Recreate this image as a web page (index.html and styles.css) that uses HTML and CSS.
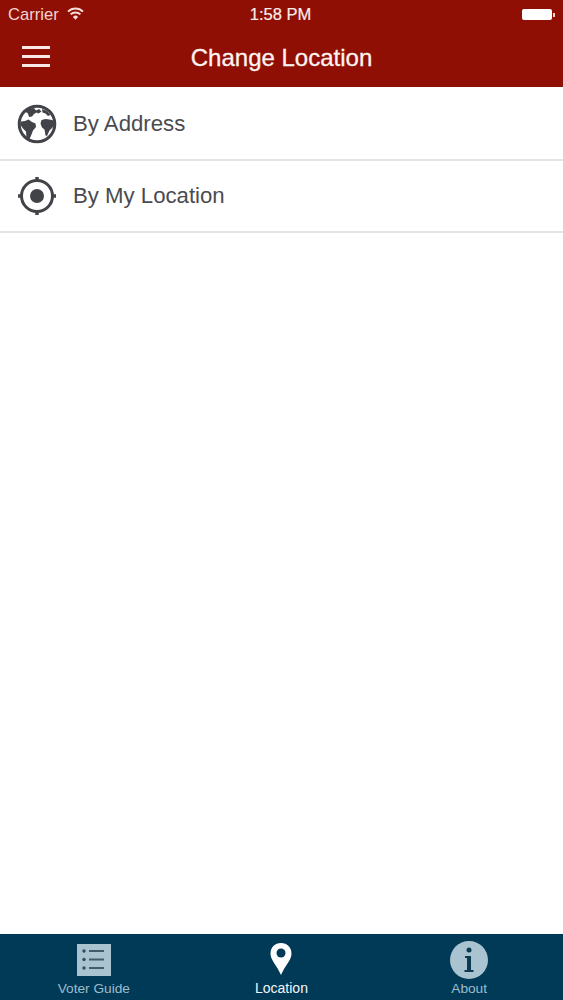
FILE: index.html
```html
<!DOCTYPE html>
<html lang="en">
<head>
  <meta charset="UTF-8" />
  <meta name="viewport" content="width=device-width, initial-scale=1" />
  <title>Change Location</title>
  <link rel="stylesheet" href="styles.css">
</head>
<body>
  <div class="app">
    <header class="top">
      <div class="status">
        <div class="status-left">
          <span class="carrier">Carrier</span>
          <svg class="wifi" width="17" height="13" viewBox="0 0 17 13">
            <path d="M1 4.6a10.6 10.6 0 0 1 15 0" fill="none" stroke="#f6dcd8" stroke-width="2"/>
            <path d="M3.6 7.4a7 7 0 0 1 9.800 0" fill="none" stroke="#f6dcd8" stroke-width="2"/>
            <path d="M8.500 12.800L5.900 9.900a3.700 3.700 0 0 1 5.200 0z" fill="#f6dcd8"/>
          </svg>
        </div>
        <span class="time">1:58 PM</span>
        <div class="battery">
          <span class="battery-body"></span>
          <span class="battery-tip"></span>
        </div>
      </div>
      <div class="navbar">
        <button class="menu-btn" aria-label="Menu">
          <span></span><span></span><span></span>
        </button>
        <h1>Change Location</h1>
      </div>
    </header>

    <main class="options">
      <a class="option" href="#">
        <svg class="option-icon" width="40" height="40" viewBox="0 0 40 40">
          <circle cx="20" cy="20" r="17.800" fill="none" stroke="#414349" stroke-width="3"/>
          <path d="M4 17.500l4-.5 3.500-1.500 3.500 2.500 3.500 1.500.5 3.500-3 3.500-1.500 4-2 4.500-2 .5-1-2-.5-6-3-3-3-4z" fill="#414349"/>
          <path d="M24.500 16l4-1 4 .5 4.500 1 .5 4-2 3-3 3-2.500 5.500-1.500-.5-1-6-2.500-2-1.500-4z" fill="#414349"/>
          <path d="M8 7.500l4-3 5-.5 2 2.500 3-1.500 2.500 2.500-3 2-2-1-2.500 1.500-2 2.500-3 .5-1-3.500z" fill="#414349"/>
          <path d="M25 5l5 2 3.500 4-2.500 1-2.500-2.500-3-1z" fill="#414349"/>
        </svg>
        <span>By Address</span>
      </a>
      <a class="option" href="#">
        <svg class="option-icon" width="40" height="40" viewBox="0 0 40 40">
          <circle cx="20" cy="20" r="15.500" fill="none" stroke="#414349" stroke-width="3"/>
          <circle cx="20" cy="20" r="7" fill="#414349"/>
          <path d="M20 1v5M20 34v5M1 20h5M34 20h5" stroke="#414349" stroke-width="3.500" fill="none"/>
        </svg>
        <span>By My Location</span>
      </a>
    </main>

    <nav class="tabs">
      <a class="tab" href="#">
        <svg class="tab-icon" width="34" height="38" viewBox="0 0 34 38">
          <rect x="0" y="3" width="34" height="32" fill="#a9c3d1"/>
          <circle cx="7" cy="10" r="1.700" fill="#2f4f60"/>
          <circle cx="7" cy="18.500" r="1.700" fill="#2f4f60"/>
          <circle cx="7" cy="27" r="1.700" fill="#2f4f60"/>
          <path d="M12 10h15M12 18.500h15M12 27h15" stroke="#3f5d6e" stroke-width="2" fill="none"/>
        </svg>
        <span>Voter Guide</span>
      </a>
      <a class="tab tab-active" href="#">
        <svg class="tab-icon" width="34" height="38" viewBox="0 0 34 38">
          <path d="M17 3C10.800 3 6.500 7.600 6.500 13.500c0 7 6.500 12 10.500 21.500 4-9.500 10.500-14.500 10.500-21.500C27.500 7.600 23.200 3 17 3z" fill="#fff"/>
          <circle cx="17" cy="13" r="4.500" fill="#003a56"/>
        </svg>
        <span>Location</span>
      </a>
      <a class="tab" href="#">
        <svg class="tab-icon" width="38" height="38" viewBox="0 0 38 38">
          <circle cx="19" cy="19" r="19" fill="#a9c3d1"/>
          <circle cx="19" cy="9" r="2.500" fill="#0d3a50"/>
          <path d="M15 15h6v14h2.500v2h-9v-2H17V17h-2z" fill="#0d3a50"/>
        </svg>
        <span>About</span>
      </a>
    </nav>
  </div>
</body>
</html>
```

FILE: styles.css
```css
html, body {
  margin: 0;
  height: 100%;
}
body {
  font-family: 'Liberation Sans', Arial, sans-serif;
  background: #fff;
}
.app {
  display: flex;
  flex-direction: column;
  height: 1000px;
}

/* TOP BAR */
.top {
  background: #8f0f04;
  height: 87px;
  flex: none;
  color: #fff;
}
.status {
  display: grid;
  grid-template-columns: 1fr auto 1fr;
  align-items: center;
  height: 29px;
  padding: 0 8px;
}
.status-left {
  display: flex;
  align-items: center;
  gap: 8px;
}
.carrier {
  font-size: 16.600px;
  color: #f3d5d0;
}
.wifi {
  margin-top: -3px;
}
.time {
  font-size: 16.500px;
  color: #fbeeec;
  margin-right: 2px;
  -webkit-text-stroke: 0.2px #fbeeec;
}
.battery {
  display: flex;
  justify-content: flex-end;
  align-items: center;
  gap: 1px;
}
.battery-body {
  width: 30px;
  height: 11px;
  background: #fff;
  border-radius: 2px;
}
.battery-tip {
  width: 2px;
  height: 4px;
  background: #f3d5d0;
}
.navbar {
  height: 58px;
  display: flex;
  align-items: center;
  justify-content: center;
  position: relative;
}
.navbar h1 {
  margin: 0;
  font-size: 24px;
  font-weight: normal;
  color: #fdf3f1;
  -webkit-text-stroke: 0.3px #fdf3f1;
}
.menu-btn {
  position: absolute;
  left: 22px;
  top: 17px;
  width: 28px;
  padding: 0;
  border: none;
  background: none;
  display: flex;
  flex-direction: column;
  gap: 6px;
}
.menu-btn span {
  display: block;
  height: 3px;
  background: #f9e8e5;
}

/* OPTIONS */
.options {
  flex: 1;
  padding-top: 2px;
}
.option {
  display: flex;
  align-items: center;
  gap: 16px;
  height: 70px;
  padding-left: 17px;
  border-bottom: 2px solid #e4e4e6;
  color: #4a4b50;
  font-size: 22.200px;
  text-decoration: none;
}
.option-icon {
  flex: none;
}

/* TAB BAR */
.tabs {
  flex: none;
  height: 66px;
  background: #003a56;
  display: grid;
  grid-template-columns: repeat(3, 1fr);
}
.tab {
  display: flex;
  flex-direction: column;
  align-items: center;
  justify-content: flex-end;
  padding-bottom: 4px;
  gap: 2px;
  color: #9dbccc;
  font-size: 13.700px;
  text-decoration: none;
}
.tab-active {
  color: #f2f6f8;
  font-size: 14px;
}
```
